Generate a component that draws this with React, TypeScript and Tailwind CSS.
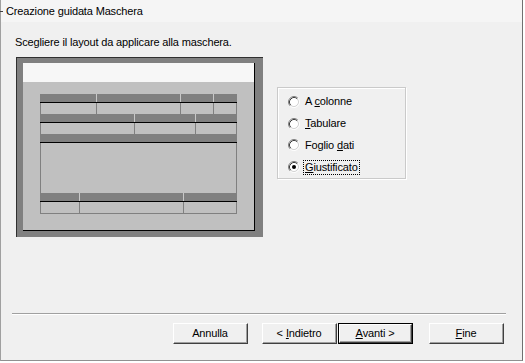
import React from 'react';

const font = { fontFamily: '"Liberation Sans", Arial, sans-serif', letterSpacing: '-0.15px' };

type Row = { cols: string[]; cell: string; last?: boolean };

const rows: Row[] = [
  { cols: ['w-[56px]', 'w-[84px]', 'w-[33px]', 'w-[24px]'], cell: 'h-[11px]' },
  { cols: ['w-[94px]', 'w-[61px]', 'w-[42px]'], cell: 'h-[11px]' },
  { cols: ['w-[197px]'], cell: 'h-[50px]' },
  { cols: ['w-[39px]', 'w-[104px]', 'w-[54px]'], cell: 'h-[11px]', last: true },
];

const TableRow: React.FC<{ row: Row }> = ({ row }) => (
  <div className="w-[197px] flex flex-col">
    <div className="flex h-[8px] bg-[#808080]">
      {row.cols.map((w, i) => (
        <div key={i} className={`${w} h-full ${i > 0 ? 'border-l border-[#c8c8c8]' : ''}`} />
      ))}
    </div>
    <div className="h-px bg-black" />
    <div className={`flex ${row.cell} ${row.last ? 'box-content border-b border-[#808080]' : ''}`}>
      {row.cols.map((w, i) => (
        <div
          key={i}
          className={`${w} h-full bg-[#c0c0c0] border-l ${
            i === row.cols.length - 1 ? 'border-r' : ''
          } border-[#808080]`}
        />
      ))}
    </div>
  </div>
);

const LayoutPreview: React.FC = () => (
  <div className="w-[247px] h-[180px] border-t border-l border-[#303030] bg-[#808080] pl-[6px] pt-[5px] pr-[8px] pb-[6px]">
    <div className="w-[232px] h-[168px] border-r border-b border-black bg-[#c0c0c0] flex flex-col">
      <div className="h-[19px] bg-[#f7f7f7]" />
      <div className="pl-[17px] pt-[12px] flex flex-col">
        {rows.map((r, i) => (
          <TableRow key={i} row={r} />
        ))}
      </div>
    </div>
  </div>
);

const Radio: React.FC<{ checked?: boolean }> = ({ checked }) => (
  <svg width="12" height="12" viewBox="0 0 12 12" className="shrink-0">
    <circle cx="6" cy="6" r="4" fill="#ffffff" />
    <path d="M2.11 9.89 A5.5 5.5 0 0 1 9.89 2.11" stroke="#808080" fill="none" />
    <path d="M9.89 2.11 A5.5 5.5 0 0 1 2.11 9.89" stroke="#ffffff" fill="none" />
    <path d="M2.82 9.18 A4.5 4.5 0 0 1 9.18 2.82" stroke="#404040" fill="none" />
    <path d="M9.18 2.82 A4.5 4.5 0 0 1 2.82 9.18" stroke="#d4d4d4" fill="none" />
    {checked && <circle cx="6" cy="6" r="2" fill="#000000" />}
  </svg>
);

const options = [
  { pre: 'A ', key: 'c', post: 'olonne' },
  { pre: '', key: 'T', post: 'abulare' },
  { pre: 'Foglio ', key: 'd', post: 'ati' },
  { pre: '', key: 'G', post: 'iustificato', checked: true },
];

const Button: React.FC<{ children: React.ReactNode; isDefault?: boolean }> = ({ children, isDefault }) => (
  <div className={`w-[75px] h-[21px] ${isDefault ? 'border border-black' : ''}`}>
    <div className="w-full h-full border border-t-white border-l-white border-r-[#404040] border-b-[#404040] bg-[#f0f0f0]">
      <div className="w-full h-full border-r border-b border-[#a0a0a0] flex items-center justify-center text-[11px] text-black">
        {children}
      </div>
    </div>
  </div>
);

export default function App() {
  return (
    <div className="w-[525px] h-[363px] bg-white" style={font}>
      <div className="w-[523px] h-[361px] flex flex-col bg-[#f0f0f0] border-l border-[#a0a0a0] border-r border-r-[#707070] border-b border-b-[#909090]">
        <div className="h-[22px] flex items-center bg-[#f5f5f5] text-[11px] text-black">
          <span className="w-[3px] h-px bg-[#404040] -ml-px" />
          <span className="ml-[3px]">Creazione guidata Maschera</span>
        </div>

        <div className="pl-[14px] mt-[14px] h-[13px] leading-[13px] text-[11px] text-black">
          Scegliere il layout da applicare alla maschera.
        </div>

        <div className="flex pl-[15px] mt-[8px]">
          <LayoutPreview />
          <div className="ml-[14px] mt-[30px] w-[129px] h-[92px] border border-[#cacaca] shadow-[inset_1px_1px_0_#ffffff,1px_1px_0_#ffffff] pl-[10px] pt-[3px] flex flex-col">
            {options.map((o, i) => (
              <div key={i} className="h-[22px] flex items-center text-[11px] text-black">
                <Radio checked={o.checked} />
                <span
                  className={`ml-[3px] px-px leading-[13px] border ${
                    o.checked ? 'border-dotted border-black' : 'border-transparent'
                  }`}
                >
                  {o.pre}
                  <span className="underline">{o.key}</span>
                  {o.post}
                </span>
              </div>
            ))}
          </div>
        </div>

        <div className="mt-[76px] ml-[11px] w-[494px] h-px bg-[#a0a0a0] shadow-[0_1px_0_#ffffff]" />

        <div className="flex mt-[9px] ml-[172px]">
          <Button>Annulla</Button>
          <div className="ml-[14px]">
            <Button>
              &lt; <span className="underline ml-[3px]">I</span>ndietro
            </Button>
          </div>
          <div className="ml-px">
            <Button isDefault>
              <span className="underline">A</span>vanti &gt;
            </Button>
          </div>
          <div className="ml-[16px]">
            <Button>
              <span className="underline">F</span>ine
            </Button>
          </div>
        </div>
      </div>
    </div>
  );
}
